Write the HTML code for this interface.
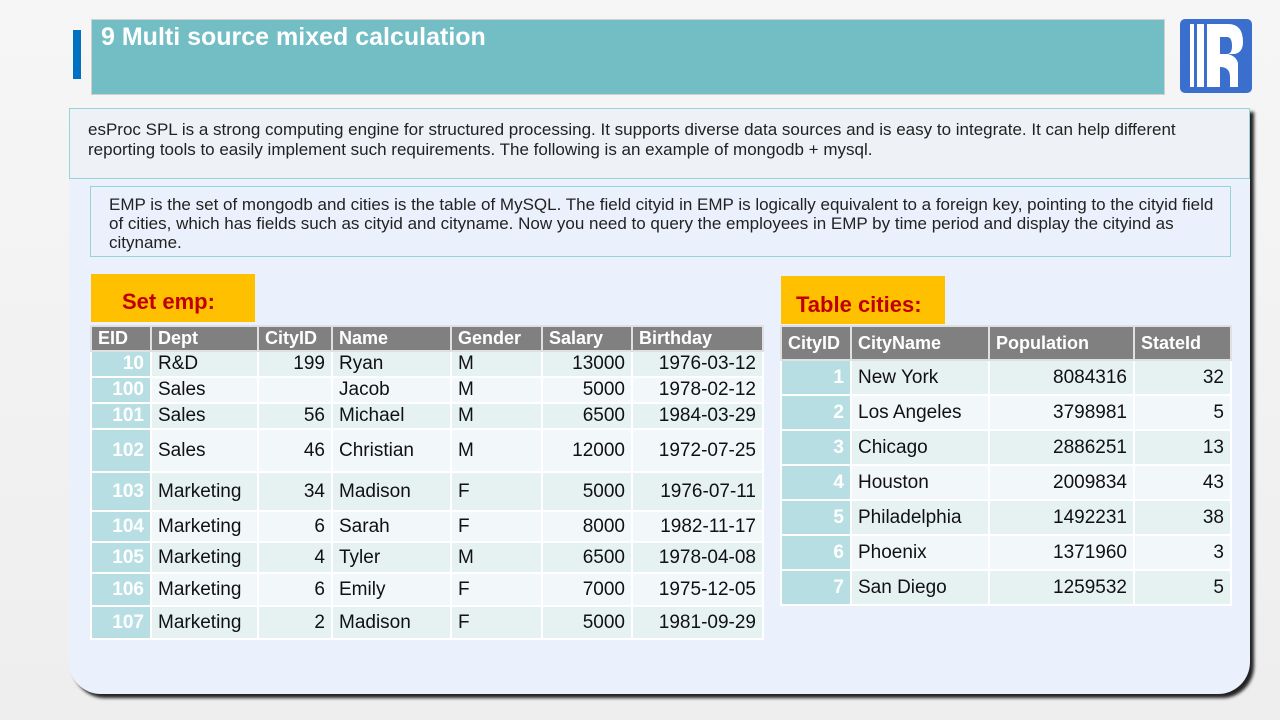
<!DOCTYPE html>
<html><head><meta charset="utf-8"><style>
*{margin:0;padding:0;box-sizing:border-box}
body{width:1280px;height:720px;position:relative;overflow:hidden;background:linear-gradient(#f6f6f6,#eeeeee);font-family:"Liberation Sans",Arial,sans-serif}
.abs{position:absolute}
table{border-collapse:collapse;position:absolute;table-layout:fixed;font-size:19px;color:#111}
td,th{border:2px solid #fff;padding:0 6px;white-space:nowrap;overflow:hidden}
th{background:#808080;color:#fff;font-weight:bold;text-align:left;font-size:18px;border-color:#e0e0e0}
td.k{background:#b7dee2;color:#fff;font-weight:bold;text-align:right}
tr.a td{background:#e6f2f2}
tr.b td{background:#f2f7fa}
tr td.k{background:#b7dee2}
.r{text-align:right}
.lbl{background:#ffc000;color:#c00000;font-weight:bold;font-size:22px}
</style></head><body>
<div class="abs" style="left:73px;top:30px;width:8px;height:49px;background:#0070c0"></div>
<div class="abs" style="left:91px;top:19px;width:1074px;height:76px;background:#72bec4;border:1px solid #d0d0d0;color:#fff;font-weight:bold;font-size:25px;padding:3px 0 0 9px">9 Multi source mixed calculation</div>
<svg class="abs" style="left:1180px;top:19px" width="72" height="74" viewBox="0 0 72 74">
<rect x="0" y="0" width="72" height="74" rx="5" fill="#3a6fcd"/>
<rect x="10" y="5" width="4" height="63" fill="#fff"/>
<rect x="17" y="5" width="7" height="63" fill="#fff"/>
<path d="M27 5 H48 Q63 5 63 23 Q63 33 55 35 H48 Q56 37 58 44 V68 H50 V58 Q50 48 40 48 V68 H27 Z M40 18 V35 H47 Q52 35 52 27 Q52 18 47 18 Z" fill="#fff"/>
</svg>
<div class="abs" style="left:69px;top:108px;width:1181px;height:586px;background:#ebf1fc;border-radius:0 0 32px 32px;box-shadow:4px 4px 3px #222"></div>
<div class="abs" style="left:69px;top:108px;width:1181px;height:71px;background:#eef2f7;border:1px solid #99d3da;font-size:17px;line-height:20px;color:#222;padding:11px 50px 0 18px">esProc SPL is a strong computing engine for structured processing. It supports diverse data sources and is easy to integrate. It can help different reporting tools to easily implement such requirements. The following is an example of mongodb + mysql.</div>
<div class="abs" style="left:90px;top:186px;width:1141px;height:71px;border:1px solid #99d3da;font-size:17px;line-height:19px;color:#222;padding:8px 14px 0 18px">EMP is the set of mongodb and cities is the table of MySQL. The field cityid in EMP is logically equivalent to a foreign key, pointing to the cityid field of cities, which has fields such as cityid and cityname. Now you need to query the employees in EMP by time period and display the cityind as cityname.</div>
<div class="abs lbl" style="left:91px;top:274px;width:164px;height:48px;padding:15px 0 0 31px">Set emp:</div>
<table style="left:90px;top:325px;width:672px">
<colgroup><col style="width:60px"><col style="width:107px"><col style="width:74px"><col style="width:119px"><col style="width:91px"><col style="width:90px"><col style="width:131px"></colgroup>
<tr style="height:25px"><th>EID</th><th>Dept</th><th>CityID</th><th>Name</th><th>Gender</th><th>Salary</th><th>Birthday</th></tr>
<tr class="a" style="height:26px"><td class="k">10</td><td>R&amp;D</td><td class="r">199</td><td>Ryan</td><td>M</td><td class="r">13000</td><td class="r">1976-03-12</td></tr>
<tr class="b" style="height:26px"><td class="k">100</td><td>Sales</td><td class="r"></td><td>Jacob</td><td>M</td><td class="r">5000</td><td class="r">1978-02-12</td></tr>
<tr class="a" style="height:26px"><td class="k">101</td><td>Sales</td><td class="r">56</td><td>Michael</td><td>M</td><td class="r">6500</td><td class="r">1984-03-29</td></tr>
<tr class="b" style="height:43px"><td class="k">102</td><td>Sales</td><td class="r">46</td><td>Christian</td><td>M</td><td class="r">12000</td><td class="r">1972-07-25</td></tr>
<tr class="a" style="height:39px"><td class="k">103</td><td>Marketing</td><td class="r">34</td><td>Madison</td><td>F</td><td class="r">5000</td><td class="r">1976-07-11</td></tr>
<tr class="b" style="height:31px"><td class="k">104</td><td>Marketing</td><td class="r">6</td><td>Sarah</td><td>F</td><td class="r">8000</td><td class="r">1982-11-17</td></tr>
<tr class="a" style="height:31px"><td class="k">105</td><td>Marketing</td><td class="r">4</td><td>Tyler</td><td>M</td><td class="r">6500</td><td class="r">1978-04-08</td></tr>
<tr class="b" style="height:33px"><td class="k">106</td><td>Marketing</td><td class="r">6</td><td>Emily</td><td>F</td><td class="r">7000</td><td class="r">1975-12-05</td></tr>
<tr class="a" style="height:33px"><td class="k">107</td><td>Marketing</td><td class="r">2</td><td>Madison</td><td>F</td><td class="r">5000</td><td class="r">1981-09-29</td></tr>
</table>
<div class="abs lbl" style="left:781px;top:276px;width:164px;height:48px;padding:16px 0 0 15px">Table cities:</div>
<table style="left:780px;top:325px;width:450px">
<colgroup><col style="width:70px"><col style="width:138px"><col style="width:145px"><col style="width:97px"></colgroup>
<tr style="height:34px"><th>CityID</th><th>CityName</th><th>Population</th><th>StateId</th></tr>
<tr class="a" style="height:35px"><td class="k">1</td><td>New York</td><td class="r">8084316</td><td class="r">32</td></tr>
<tr class="b" style="height:35px"><td class="k">2</td><td>Los Angeles</td><td class="r">3798981</td><td class="r">5</td></tr>
<tr class="a" style="height:35px"><td class="k">3</td><td>Chicago</td><td class="r">2886251</td><td class="r">13</td></tr>
<tr class="b" style="height:35px"><td class="k">4</td><td>Houston</td><td class="r">2009834</td><td class="r">43</td></tr>
<tr class="a" style="height:35px"><td class="k">5</td><td>Philadelphia</td><td class="r">1492231</td><td class="r">38</td></tr>
<tr class="b" style="height:35px"><td class="k">6</td><td>Phoenix</td><td class="r">1371960</td><td class="r">3</td></tr>
<tr class="a" style="height:35px"><td class="k">7</td><td>San Diego</td><td class="r">1259532</td><td class="r">5</td></tr>
</table>
</body></html>
